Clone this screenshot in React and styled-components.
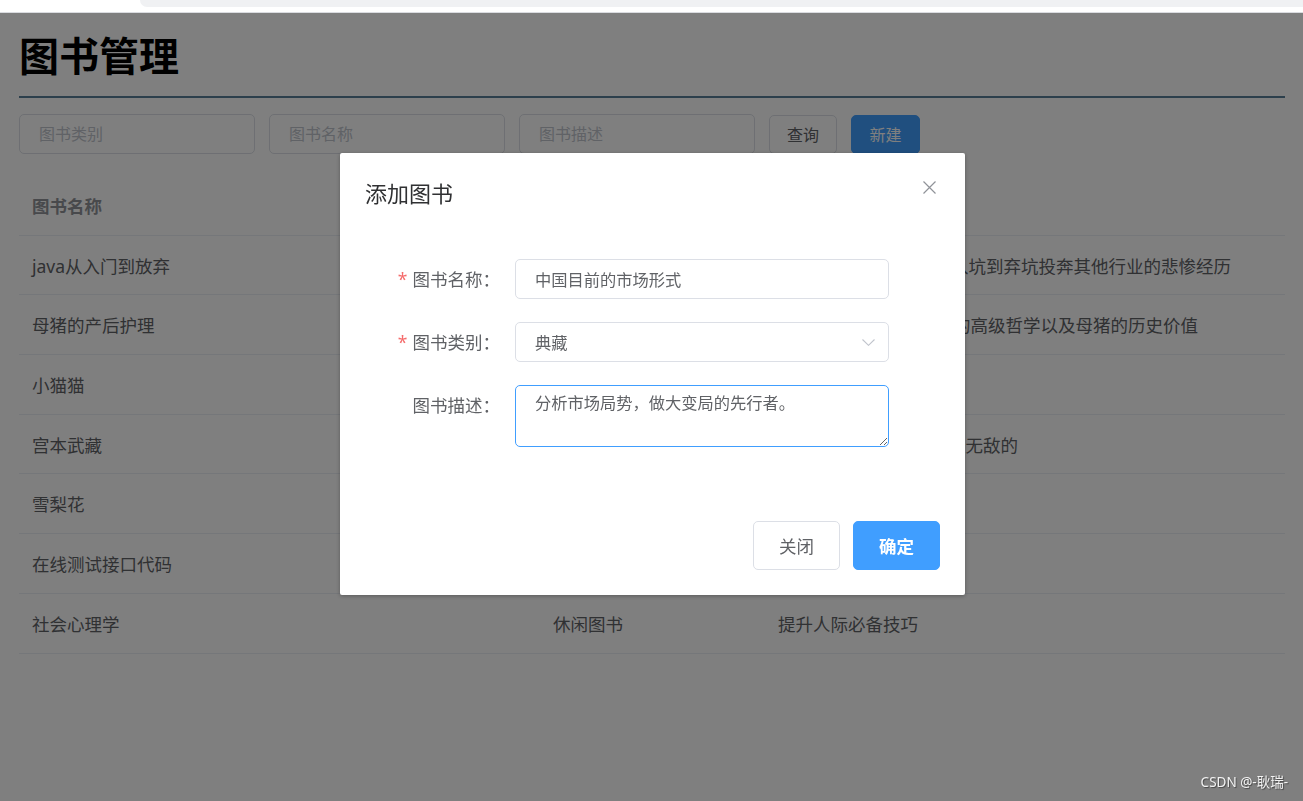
import React from 'react';
import styled, { createGlobalStyle } from 'styled-components';

const FONT = `"Noto Sans", "Liberation Sans", "Noto Sans CJK SC", sans-serif`;

const GlobalStyle = createGlobalStyle`
    html, body {
        margin: 0;
        padding: 0;
        background: #fff;
        font-family: ${FONT};
    }
    * {
        box-sizing: border-box;
    }
`;

const BrowserStrip = styled.div`
    height: 13px;
    background: #fff;
    border-bottom: 1px solid #dadce0;
`;

const StripTab = styled.div`
    margin-left: 140px;
    height: 7px;
    background: #f0f1f3;
    border-bottom-left-radius: 8px;
`;

const Page = styled.div`
    padding: 15px 18px 0 19px;
`;

const Title = styled.h1`
    margin: 0;
    font-size: 40px;
    line-height: 56px;
    font-weight: 700;
    color: #000;
`;

const Divider = styled.div`
    margin-top: 12px;
    height: 2px;
    background: #587f99;
`;

const SearchBar = styled.div`
    margin-top: 16px;
    display: flex;
    align-items: center;
    gap: 14px;
`;

const SearchInput = styled.input`
    width: 236px;
    height: 40px;
    padding: 0 19px;
    border: 1px solid #dcdfe6;
    border-radius: 5px;
    font-family: ${FONT};
    font-size: 16px;
    color: #606266;
    outline: none;
    &::placeholder {
        color: #c0c4cc;
    }
`;

const Button = styled.button`
    width: ${(p) => p.$w}px;
    height: ${(p) => p.$h}px;
    padding: 0;
    border-radius: 5px;
    border: 1px solid ${(p) => (p.$primary ? '#409eff' : '#dcdfe6')};
    background: ${(p) => (p.$primary ? '#409eff' : '#fff')};
    color: ${(p) => (p.$primary ? '#fff' : '#606266')};
    font-family: ${FONT};
    font-size: ${(p) => p.$fs}px;
    font-weight: ${(p) => (p.$bold ? 600 : 400)};
    cursor: pointer;
`;

const Table = styled.div`
    margin-top: 22px;
`;

const Row = styled.div`
    display: grid;
    grid-template-columns: 521px 225px 1fr;
    height: 59.7px;
    align-items: center;
    border-bottom: 1px solid #ebeef5;
    font-size: 17.5px;
    color: ${(p) => (p.$head ? '#909399' : '#606266')};
    font-weight: ${(p) => (p.$head ? 700 : 400)};
`;

const Cell = styled.div`
    padding-left: 13px;
    white-space: nowrap;
    overflow: hidden;
`;

const Overlay = styled.div`
    position: fixed;
    top: 13px;
    left: 0;
    right: 0;
    bottom: 0;
    background: rgba(0, 0, 0, 0.5);
`;

const Dialog = styled.div`
    width: 625px;
    margin: 140px 0 0 340px;
    background: #fff;
    border-radius: 2px;
    box-shadow: 0 1px 4px rgba(0, 0, 0, 0.3);
`;

const DialogHeader = styled.div`
    display: flex;
    justify-content: space-between;
    align-items: flex-start;
    padding: 25px 29px 12px 25px;
`;

const DialogTitle = styled.span`
    font-size: 22px;
    line-height: 30px;
    color: #303133;
`;

const CloseBtn = styled.button`
    margin-top: 3px;
    padding: 0;
    border: none;
    background: none;
    width: 13px;
    height: 14px;
    display: flex;
    cursor: pointer;
`;

const DialogBody = styled.div`
    padding: 39px 25px 38px;
`;

const FormItem = styled.div`
    display: flex;
    margin-bottom: 23px;
`;

const Label = styled.label`
    width: 150px;
    padding-right: 15px;
    text-align: right;
    line-height: 40px;
    font-size: 17.5px;
    color: #606266;
`;

const Star = styled.span`
    color: #f56c6c;
    margin-right: 5px;
`;

const Field = styled.div`
    position: relative;
    width: 374px;
`;

const TextInput = styled.input`
    width: 100%;
    height: 40px;
    padding: 0 ${(p) => (p.$select ? 40 : 19)}px 0 19px;
    border: 1px solid #dcdfe6;
    border-radius: 5px;
    font-family: ${FONT};
    font-size: 16.25px;
    color: #606266;
    background: #fff;
    outline: none;
`;

const Chevron = styled.svg`
    position: absolute;
    right: 14px;
    top: 17px;
`;

const TextArea = styled.textarea`
    display: block;
    width: 100%;
    height: 62px;
    padding: 5px 19px;
    border: 1px solid #409eff;
    border-radius: 5px;
    font-family: ${FONT};
    font-size: 16.25px;
    line-height: 1.5;
    color: #606266;
    resize: vertical;
    outline: none;
`;

const DialogFooter = styled.div`
    display: flex;
    justify-content: flex-end;
    gap: 13px;
    padding: 13px 25px 25px;
`;

const Watermark = styled.div`
    position: absolute;
    right: 15px;
    bottom: 10px;
    font-size: 13.5px;
    color: #f2f2f2;
    text-shadow: 1px 1px 1px rgba(0, 0, 0, 0.45);
`;

const books = [
    ['java从入门到放弃', '编程技术', '讲述一个java程序员从入坑到弃坑投奔其他行业的悲惨经历'],
    ['母猪的产后护理', '养殖技术', '论述母猪产后护理背后的高级哲学以及母猪的历史价值'],
    ['小猫猫', '宠物', '可爱的小猫猫'],
    ['宫本武藏', '人物传记', '一生100余战从未败北是无敌的'],
    ['雪梨花', '文学', '雪梨花开'],
    ['在线测试接口代码', '编程技术', ''],
    ['社会心理学', '休闲图书', '提升人际必备技巧'],
];

const App = () => {
    return (
        <>
            <GlobalStyle />
            <BrowserStrip>
                <StripTab />
            </BrowserStrip>
            <Page>
                <Title>图书管理</Title>
                <Divider />
                <SearchBar>
                    <SearchInput placeholder='图书类别' />
                    <SearchInput placeholder='图书名称' />
                    <SearchInput placeholder='图书描述' />
                    <Button $w={68} $h={39} $fs={16}>查询</Button>
                    <Button $w={69} $h={39} $fs={16} $primary>新建</Button>
                </SearchBar>
                <Table>
                    <Row $head>
                        <Cell>图书名称</Cell>
                        <Cell>图书类别</Cell>
                        <Cell>图书描述</Cell>
                    </Row>
                    {books.map((b) => (
                        <Row key={b[0]}>
                            <Cell>{b[0]}</Cell>
                            <Cell>{b[1]}</Cell>
                            <Cell>{b[2]}</Cell>
                        </Row>
                    ))}
                </Table>
            </Page>
            <Overlay>
                <Dialog>
                    <DialogHeader>
                        <DialogTitle>添加图书</DialogTitle>
                        <CloseBtn aria-label='close'>
                            <svg width='13' height='13' viewBox='0 0 13 13'>
                                <path d='M0.5 0.5L12.5 12.5M12.5 0.5L0.5 12.5' stroke='#909399' strokeWidth='1.2' fill='none' />
                            </svg>
                        </CloseBtn>
                    </DialogHeader>
                    <DialogBody>
                        <FormItem>
                            <Label><Star>*</Star>图书名称：</Label>
                            <Field>
                                <TextInput readOnly defaultValue='中国目前的市场形式' />
                            </Field>
                        </FormItem>
                        <FormItem>
                            <Label><Star>*</Star>图书类别：</Label>
                            <Field>
                                <TextInput $select readOnly defaultValue='典藏' />
                                <Chevron width='13' height='7' viewBox='0 0 13 7'>
                                    <path d='M0.5 0.5L6.5 6.3L12.5 0.5' stroke='#c0c4cc' strokeWidth='1.1' fill='none' />
                                </Chevron>
                            </Field>
                        </FormItem>
                        <FormItem>
                            <Label>图书描述：</Label>
                            <Field>
                                <TextArea readOnly defaultValue='分析市场局势，做大变局的先行者。' />
                            </Field>
                        </FormItem>
                    </DialogBody>
                    <DialogFooter>
                        <Button $w={87} $h={49} $fs={17.5}>关闭</Button>
                        <Button $w={87} $h={49} $fs={17.5} $primary $bold>确定</Button>
                    </DialogFooter>
                </Dialog>
                <Watermark>CSDN @-耿瑞-</Watermark>
            </Overlay>
        </>
    );
};

export default App;
